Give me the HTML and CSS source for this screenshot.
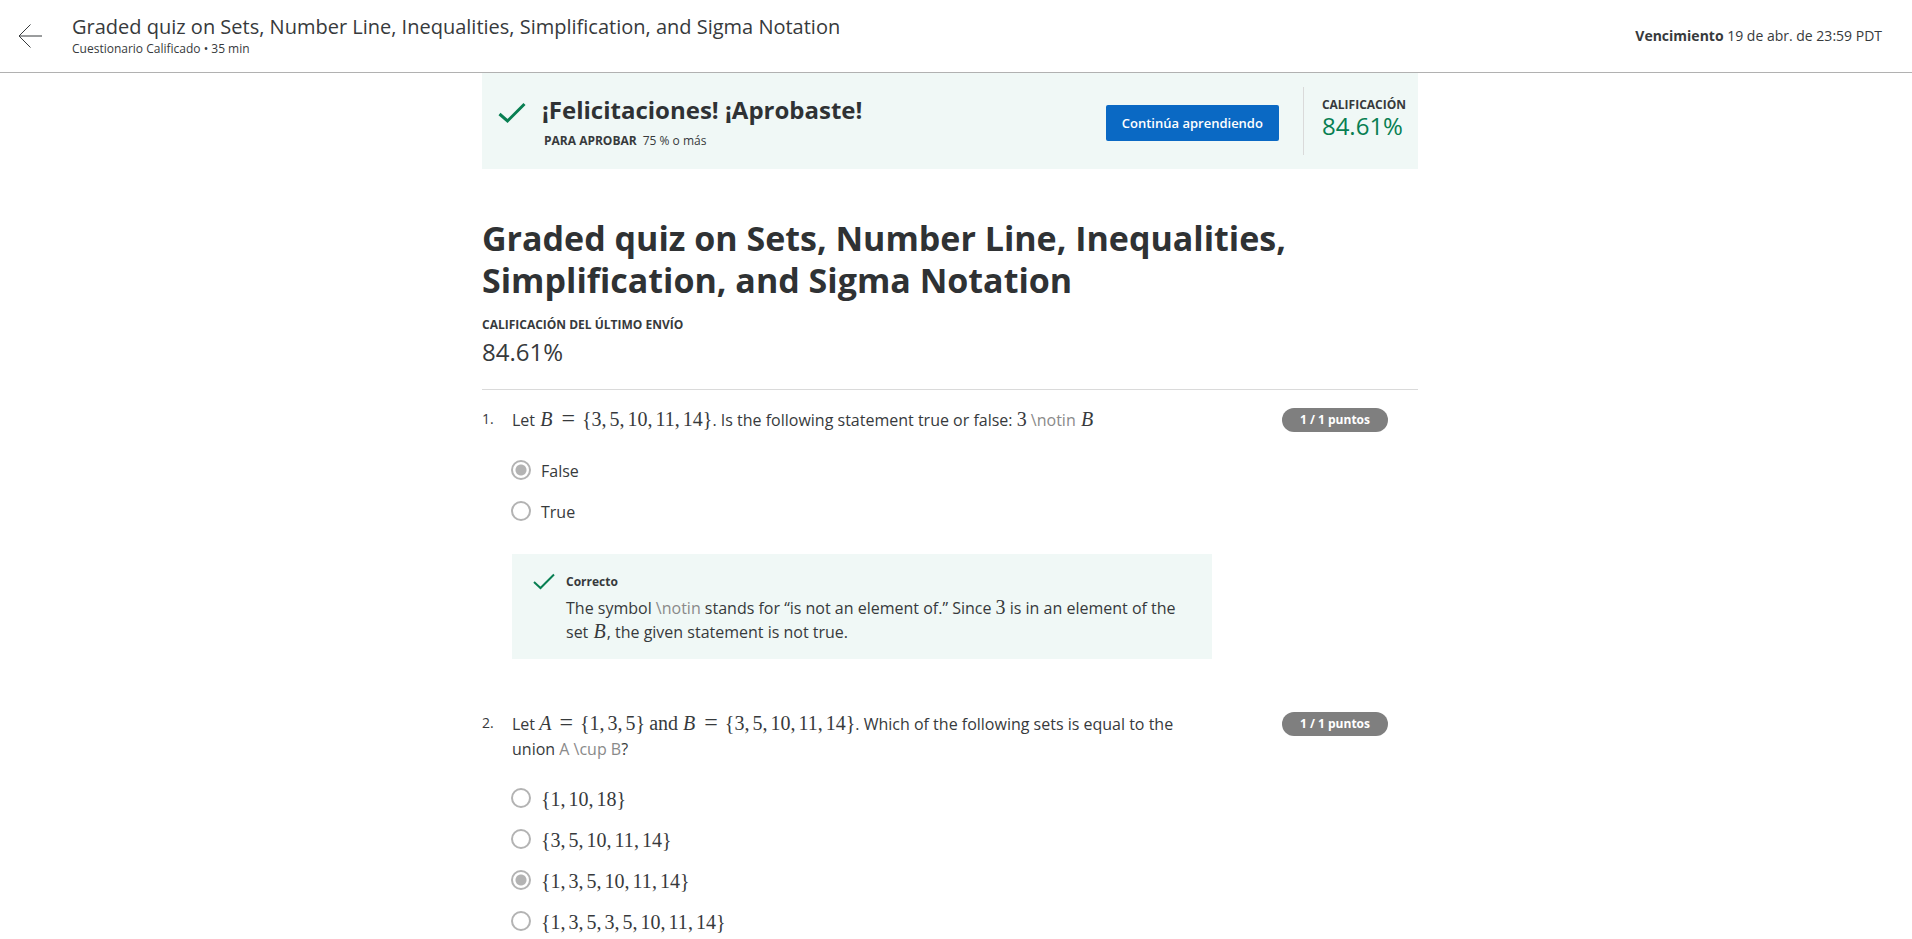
FILE: index.html
```html
<!DOCTYPE html>
<html lang="es">
<head>
<meta charset="utf-8">
<title>Graded quiz on Sets, Number Line, Inequalities, Simplification, and Sigma Notation</title>
<link rel="stylesheet" href="styles.css">
</head>
<body>
<header class="topbar">
  <a class="back" href="#" aria-label="Volver">
    <svg width="24" height="24" viewBox="0 0 24 24" fill="none" stroke="currentColor"><path d="M24 12H1M12.5 0.5L1 12L12.5 23.5"/></svg>
  </a>
  <div class="topbar-title">
    <div class="quiz-name">Graded quiz on Sets, Number Line, Inequalities, Simplification, and Sigma Notation</div>
    <div class="quiz-meta">Cuestionario Calificado • 35 min</div>
  </div>
  <div class="due"><strong>Vencimiento</strong> 19 de abr. de 23:59 PDT</div>
</header>
<main class="page">
  <div class="column">
    <section class="banner">
      <svg class="banner-check" width="28" height="22" viewBox="0 0 28 22" fill="none" stroke="currentColor" stroke-width="3"><path d="M1.5 12L9.5 19L26.5 2"/></svg>
      <div class="banner-text">
        <h2 class="banner-title">¡Felicitaciones! ¡Aprobaste!</h2>
        <p class="banner-sub"><strong>PARA APROBAR</strong><span>75 % o más</span></p>
      </div>
      <button class="continue" type="button">Continúa aprendiendo</button>
      <div class="score">
        <div class="label">CALIFICACIÓN</div>
        <div class="score-value">84.61%</div>
      </div>
    </section>

    <section class="summary">
      <h1 class="heading">Graded quiz on Sets, Number Line, Inequalities, Simplification, and Sigma Notation</h1>
      <div class="label">CALIFICACIÓN DEL ÚLTIMO ENVÍO</div>
      <div class="last-grade">84.61%</div>
    </section>

    <section class="question">
      <div class="number">1.</div>
      <div class="body">
        <div class="prompt" id="q1">Let <span class="math"><i>B</i><span class="rel">=</span>{3<span class="c">,</span>5<span class="c">,</span>10<span class="c">,</span>11<span class="c">,</span>14}</span>. Is the following statement true or false: <span class="math">3</span> <span class="raw">\notin</span> <span class="math"><i>B</i></span></div>
        <div class="options" role="radiogroup" aria-labelledby="q1">
          <label class="option"><input type="radio" name="q1" checked><span>False</span></label>
          <label class="option"><input type="radio" name="q1"><span>True</span></label>
        </div>
        <div class="feedback">
          <svg class="feedback-check" width="22" height="17" viewBox="0 0 22 17" fill="none" stroke="currentColor" stroke-width="2"><path d="M1 9L7.5 15L21 1.5"/></svg>
          <div>
            <div class="feedback-title">Correcto</div>
            <p class="feedback-text">The symbol <span class="raw">\notin</span> stands for “is not an element of.” Since <span class="math">3</span> is in an element of the set <span class="math"><i>B</i></span>, the given statement is not true.</p>
          </div>
        </div>
      </div>
      <div class="points">1 / 1 puntos</div>
    </section>

    <section class="question">
      <div class="number">2.</div>
      <div class="body">
        <div class="prompt" id="q2">Let <span class="math"><i class="tight">A</i><span class="rel">=</span>{1<span class="c">,</span>3<span class="c">,</span>5}<span class="word">and</span><i>B</i><span class="rel">=</span>{3<span class="c">,</span>5<span class="c">,</span>10<span class="c">,</span>11<span class="c">,</span>14}</span>. Which of the following sets is equal to the union <span class="raw">A \cup B</span>?</div>
        <div class="options" role="radiogroup" aria-labelledby="q2">
          <label class="option"><input type="radio" name="q2"><span class="math">{1<span class="c">,</span>10<span class="c">,</span>18}</span></label>
          <label class="option"><input type="radio" name="q2"><span class="math">{3<span class="c">,</span>5<span class="c">,</span>10<span class="c">,</span>11<span class="c">,</span>14}</span></label>
          <label class="option"><input type="radio" name="q2" checked><span class="math">{1<span class="c">,</span>3<span class="c">,</span>5<span class="c">,</span>10<span class="c">,</span>11<span class="c">,</span>14}</span></label>
          <label class="option"><input type="radio" name="q2"><span class="math">{1<span class="c">,</span>3<span class="c">,</span>5<span class="c">,</span>3<span class="c">,</span>5<span class="c">,</span>10<span class="c">,</span>11<span class="c">,</span>14}</span></label>
        </div>
      </div>
      <div class="points">1 / 1 puntos</div>
    </section>
  </div>
</main>
</body>
</html>
```
FILE: styles.css
```css
* { box-sizing: border-box; }
body {
  margin: 0;
  background: #fff;
  color: #373a3c;
  font: 16px/24px "Open Sans", "Noto Sans", sans-serif;
}
h1, h2, p { margin: 0; }

.topbar {
  display: flex;
  align-items: center;
  min-height: 73px;
  padding: 0 30px 0 18px;
  border-bottom: 1px solid #b1b1b1;
}
.back { display: flex; margin-right: 30px; color: #373a3c; }
.topbar-title { flex: 1; }
.quiz-name { font-size: 20px; line-height: 26px; }
.quiz-meta { font-size: 12px; line-height: 18px; }
.due { font-size: 14px; }

.page { padding-right: 12px; }
.column { max-width: 936px; margin: 0 auto; }

.banner {
  display: flex;
  align-items: center;
  min-height: 96px;
  padding: 14px 12px 14px 16px;
  background: #f0f8f6;
}
.banner-check { align-self: flex-start; margin: 15px 16px 0 0; color: #087f52; }
.banner-text { flex: 1; padding-top: 2px; }
.banner-title { font-size: 24px; line-height: 32px; color: #2f3234; }
.banner-sub { display: flex; gap: 6px; margin-top: 6px; padding-left: 2px; font-size: 12px; line-height: 18px; }
.label { font-size: 12px; line-height: 18px; font-weight: 700; }
.continue {
  margin: 4px 24px 0 0;
  padding: 8px 16px;
  border: 0;
  border-radius: 2px;
  background: #0a69c4;
  color: #fff;
  font: 600 13px/20px "Open Sans", sans-serif;
}
.score { min-height: 68px; padding: 9px 0 0 18px; border-left: 1px solid #dadada; }
.score-value { font-size: 24px; line-height: 24px; color: #087f52; }

.summary { padding: 48px 0 21px; border-bottom: 1px solid #dadada; }
.heading { margin-bottom: 15px; font-size: 34px; line-height: 42px; color: #2f3234; }
.last-grade { margin-top: 2px; font-size: 24px; line-height: 32px; }

.question {
  display: grid;
  grid-template-columns: 30px minmax(0, 700px) 1fr;
  align-items: start;
  padding-top: 18px;
}
.question + .question { padding-top: 53px; }
.number { font-size: 14px; line-height: 22px; }
.prompt { line-height: 25px; padding-right: 30px; }
.raw { color: #8a8a8a; }
.math { font: 20px/22px "Liberation Serif", serif; }
.math i { margin: 0 1px; }
.math .tight { margin: 0; }
.c { margin-right: 3px; }
.rel { margin: 0 7px 0 8px; font-size: 24px; line-height: 20px; }
.word { margin: 0 4px; }
.options { display: grid; gap: 16px; margin-top: 26px; }
.question + .question .options { margin-top: 25px; }
.option { display: flex; align-items: flex-start; gap: 10px; line-height: 25px; }
.option .math { line-height: 24px; }
.option input {
  appearance: none;
  width: 20px;
  height: 20px;
  margin: 1px 0 4px -1px;
  border: 2px solid #b3b3b3;
  border-radius: 50%;
  background: #fff;
}
.option input:checked { background: radial-gradient(circle, #b3b3b3 5px, #fff 6px); }
.feedback { display: flex; margin-top: 29px; padding: 19px 32px 15px 21px; background: #f0f8f6; }
.feedback-check { flex: none; margin: 0 11px 0 0; color: #087f52; }
.feedback-title { font-size: 12px; line-height: 18px; font-weight: 700; }
.feedback-text { margin-top: 5px; }
.points {
  justify-self: end;
  margin-right: 30px;
  padding: 3px 18px;
  border-radius: 12px;
  background: #7f7f7f;
  color: #fff;
  font-size: 12px;
  line-height: 18px;
  font-weight: 700;
}
```
